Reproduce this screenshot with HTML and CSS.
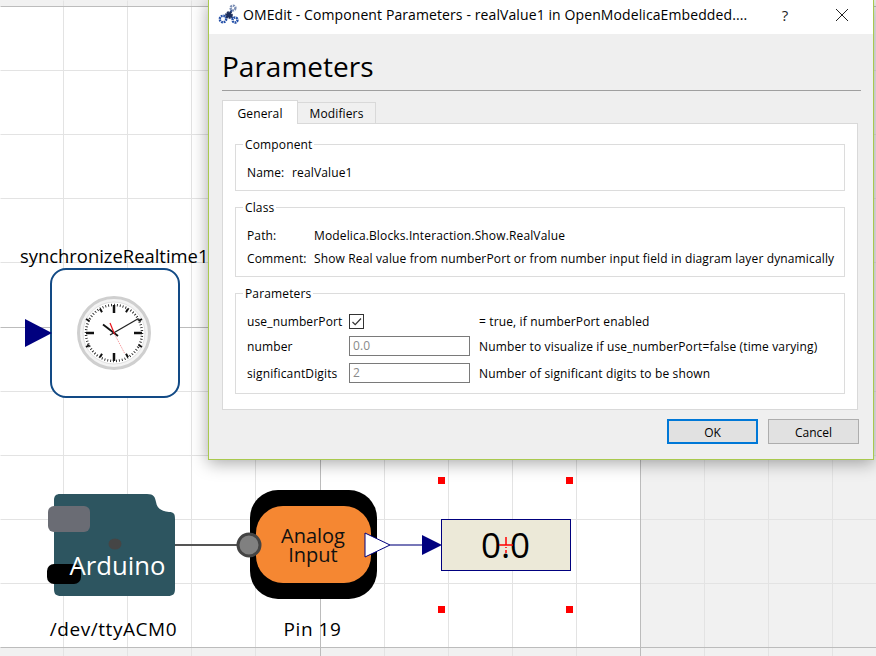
FILE: index.html
```html
<!DOCTYPE html>
<html lang="en">
<head>
<meta charset="utf-8">
<title>OMEdit - Component Parameters</title>
<link rel="stylesheet" href="styles.css">
</head>
<body>
<svg class="canvas" width="876" height="656" viewBox="0 0 876 656" xmlns="http://www.w3.org/2000/svg">
  <rect class="page" x="0" y="6" width="640" height="641"/>
  <g class="grid">
    <path d="M63 0V656M127 0V656M191 0V656M255 0V656M384 0V656M448 0V656M512 0V656M576 0V656M704 0V656M768 0V656M832 0V656"/>
    <path d="M0 70H876M0 134H876M0 198H876M0 262H876M0 391H876M0 455H876M0 519H876M0 583H876"/>
  </g>
  <g class="axis">
    <path d="M320 0V656M640 0V656M0 6H876M0 327H640M0 647H876"/>
  </g>

  <text class="label" x="20" y="263">synchronizeRealtime1</text>
  <rect class="sync" x="51" y="269" width="128" height="128" rx="15"/>
  <polygon class="navy" points="25,319 52,333 25,347"/>
  <g class="clock">
    <circle class="clock-rim" cx="114" cy="333" r="35.5"/>
    <circle class="clock-face" cx="114" cy="333" r="31"/>
    <circle class="minute-ticks" cx="114" cy="333" r="28" pathLength="60"/>
    <g class="hour-ticks">
      <path d="M114 305V313M114 353V361M86 333H94M134 333H142"/>
      <path class="thin" d="M128 308.8L126 312.3M142 319L138.5 321M142 347L138.5 345M128 357.2L126 353.7M100 357.2L102 353.7M86 347L89.5 345M86 319L89.5 321M100 308.8L102 312.3"/>
    </g>
    <path class="hand-hour" d="M103 324.5L118 336"/>
    <path class="hand-minute" d="M138.5 318.5L110 335"/>
    <path class="hand-sec" d="M110 323L114.5 334"/>
    <path class="hand-sec-thin" d="M114.5 334L125 354"/>
  </g>

  <path class="arduino" d="M60 494H147C154 494 155 497 156 502C157 509 162 511 169 512C174 512 175 514 175 519V589C175 594 173 596 168 596H61C56 596 54 594 54 589V500C54 496 56 494 60 494Z"/>
  <rect class="ard-gray" x="48" y="506" width="42" height="26" rx="6"/>
  <rect class="ard-black" x="47" y="564" width="34" height="20" rx="7"/>
  <ellipse class="ard-dot" cx="115" cy="544" rx="6.5" ry="5.5"/>
  <text class="ard-text" x="117.500" y="575">Arduino</text>
  <text class="label mid" x="113.500" y="636">/dev/ttyACM0</text>
  <path class="wire" d="M175 545H240"/>

  <rect class="block" x="250" y="490" width="127" height="109" rx="28"/>
  <rect class="orange" x="256" y="506" width="115" height="77" rx="27"/>
  <circle class="port" cx="249" cy="545" r="11"/>
  <text class="block-text" x="313" y="543">Analog</text>
  <text class="block-text" x="313" y="562">Input</text>
  <polygon class="out" points="365,533 390,545 365,557"/>
  <path class="signal" d="M390 545H424"/>
  <polygon class="navy" points="422,535 442,545 422,555"/>
  <text class="label mid" x="312.500" y="636">Pin 19</text>

  <rect class="value" x="441.500" y="519.500" width="129" height="51"/>
  <text class="value-text" x="505.500" y="558">0.0</text>
  <path class="origin" d="M499 545H513"/>
  <path class="origin-v" d="M506 537V553"/>
  <rect class="handle" x="438" y="477" width="7" height="7"/>
  <rect class="handle" x="566" y="477" width="7" height="7"/>
  <rect class="handle" x="438" y="606" width="7" height="7"/>
  <rect class="handle" x="566" y="606" width="7" height="7"/>
</svg>

<section class="dialog">
  <header class="titlebar">
    <svg class="logo" width="22" height="22" viewBox="0 0 22 22" xmlns="http://www.w3.org/2000/svg">
      <path class="logo-link" d="M5 15L11 11L15 4M11 11L17 16"/>
      <circle class="logo-ring" cx="5" cy="15" r="3.200"/>
      <circle class="logo-ring dark" cx="11" cy="11" r="2.600"/>
      <circle class="logo-ring grey" cx="15" cy="4" r="2.400"/>
      <circle class="logo-ring" cx="17" cy="16" r="2.500"/>
    </svg>
    <span class="title">OMEdit - Component Parameters - realValue1 in OpenModelicaEmbedded....</span>
    <span class="help">?</span>
    <svg class="close" width="12" height="12" viewBox="0 0 12 12" xmlns="http://www.w3.org/2000/svg"><path d="M0 0L12 12M12 0L0 12"/></svg>
  </header>
  <div class="content">
    <h1 class="heading">Parameters</h1>
    <div class="tabs">
      <span class="tab active">General</span>
      <span class="tab">Modifiers</span>
    </div>
    <div class="pane">
      <fieldset class="group">
        <legend>Component</legend>
        <div class="grid-name"><span>Name:</span><span>realValue1</span></div>
      </fieldset>
      <fieldset class="group">
        <legend>Class</legend>
        <div class="grid-class">
          <span>Path:</span><span>Modelica.Blocks.Interaction.Show.RealValue</span>
          <span>Comment:</span><span>Show Real value from numberPort or from number input field in diagram layer dynamically</span>
        </div>
      </fieldset>
      <fieldset class="group">
        <legend>Parameters</legend>
        <div class="grid-params">
          <span>use_numberPort</span>
          <span class="check"><svg width="13" height="13" viewBox="0 0 13 13" xmlns="http://www.w3.org/2000/svg"><path d="M2.500 7L5.200 9.700L11 3.500"/></svg></span>
          <span>= true, if numberPort enabled</span>
          <span>number</span>
          <span class="field">0.0</span>
          <span>Number to visualize if use_numberPort=false (time varying)</span>
          <span>significantDigits</span>
          <span class="field">2</span>
          <span>Number of significant digits to be shown</span>
        </div>
      </fieldset>
    </div>
    <div class="actions">
      <button class="btn default" type="button">OK</button>
      <button class="btn" type="button">Cancel</button>
    </div>
  </div>
</section>
</body>
</html>
```
FILE: styles.css
```css
html, body { margin: 0; padding: 0; width: 876px; height: 656px; overflow: hidden; }
body { background: #f1f1f1; font-family: "Open Sans", "Noto Sans", sans-serif; font-size: 12px; color: #000; position: relative; }

.canvas { display: block; }
.page { fill: #fff; }
.grid path { fill: none; stroke: #e3e3e3; stroke-width: 1; transform: translate(.5px, .5px); }
.axis path { fill: none; stroke: #bcbcbc; stroke-width: 1; transform: translate(.5px, .5px); }

.label { font-family: "Open Sans", sans-serif; font-size: 18.400px; fill: #000; }
.mid { text-anchor: middle; font-size: 19px; letter-spacing: .55px; }
.sync { fill: #fff; stroke: #124a85; stroke-width: 2; }
.navy { fill: #00007f; }
.clock-rim { fill: #f4f4f4; stroke: #cfcfcf; stroke-width: 3; }
.clock-face { fill: #fff; stroke: #e2e2e2; stroke-width: 1; }
.minute-ticks { fill: none; stroke: #222; stroke-width: 2.500; stroke-dasharray: .3 .7; }
.hour-ticks path { fill: none; stroke: #111; stroke-width: 2.500; }
.hour-ticks .thin { stroke-width: 2; }
.hand-hour { stroke: #111; stroke-width: 1.800; fill: none; }
.hand-minute { stroke: #222; stroke-width: 1.300; fill: none; }
.hand-sec { stroke: #e8141c; stroke-width: 1.200; fill: none; }
.hand-sec-thin { stroke: #ee5a5f; stroke-width: .6; stroke-dasharray: 1.500 1; fill: none; }

.arduino { fill: #2d5560; }
.ard-gray { fill: #6a6c74; }
.ard-black { fill: #000; }
.ard-dot { fill: #454545; }
.ard-text { font-family: "Open Sans", sans-serif; font-size: 25.700px; fill: #fff; text-anchor: middle; }
.wire { stroke: #555; stroke-width: 2; fill: none; }
.block { fill: #000; }
.orange { fill: #f58732; }
.port { fill: #808080; stroke: #444; stroke-width: 3; }
.block-text { font-family: "Open Sans", sans-serif; font-size: 20px; fill: #111; text-anchor: middle; }
.out { fill: #fff; stroke: #00007f; stroke-width: 1; }
.signal { stroke: #4a4aa0; stroke-width: 1.500; fill: none; }
.value { fill: #ece9d8; stroke: #00007f; stroke-width: 1; }
.value-text { font-family: "Open Sans", sans-serif; font-size: 35px; fill: #000; text-anchor: middle; }
.origin { stroke: #ff0000; stroke-width: 1.500; fill: none; }
.origin-v { stroke: #ff0000; stroke-width: 1.500; fill: none; stroke-dasharray: 8 2 1 2; }
.handle { fill: #ff0000; }

.dialog { position: absolute; left: 208px; top: 0; width: 666px; height: 460px; box-sizing: border-box; background: #efefef; border: 1px solid #a9c94e; border-top: 0; box-shadow: 0 3px 16px rgba(0, 0, 0, .35); display: flex; flex-direction: column; }
.titlebar { height: 34px; flex: none; background: #fff; display: flex; align-items: center; padding: 0 0 5px 9px; box-sizing: border-box; }
.logo { flex: none; margin-right: 3px; }
.logo-link { fill: none; stroke: #2d4f95; stroke-width: 2; }
.logo-ring { fill: #fff; stroke: #2450a8; stroke-width: 2.400; stroke-dasharray: 1.800 .7; }
.logo-ring.dark { fill: #1c2d5a; stroke: #1c2d5a; }
.logo-ring.grey { stroke: #7c8fb5; }
.title { font-size: 14px; letter-spacing: .1px; white-space: nowrap; width: 506px; flex: none; color: #000; }
.help { font-size: 15px; margin-left: 30px; width: 12px; text-align: center; flex: none; color: #222; }
.close { margin-left: 45px; flex: none; }
.close path { stroke: #222; stroke-width: 1; fill: none; }

.content { flex: 1; display: flex; flex-direction: column; padding: 0 14px 0 13px; min-height: 0; letter-spacing: .14px; }
.heading { margin: 0 -2px 0 0; height: 57px; box-sizing: border-box; border-bottom: 1px solid #9f9f9f; font-size: 28px; letter-spacing: 0; font-weight: 400; line-height: 64px; }
.tabs { display: flex; align-items: flex-end; margin-top: 9px; height: 23px; }
.tab { box-sizing: border-box; height: 21px; line-height: 22px; text-align: center; width: 79px; border: 1px solid #d9d9d9; border-bottom: 0; background: #f0f0f0; margin-left: -1px; }
.tab.active { height: 24px; width: 76px; margin-left: 0; background: #fff; line-height: 25px; position: relative; z-index: 1; margin-bottom: -1px; }
.pane { box-sizing: border-box; height: 287px; margin-right: 1px; border: 1px solid #d9d9d9; background: #fff; padding: 12px 12px 0; display: flex; flex-direction: column; gap: 8px; }
.group { margin: 0; min-width: 0; border: 1px solid #dcdcdc; padding: 12px 10px 0 11px; box-sizing: border-box; }
.group:nth-child(1) { height: 55px; }
.group:nth-child(2) { height: 78px; }
.group:nth-child(3) { height: 109px; }
.group legend { padding: 0 2px; margin-left: -4px; height: 16px; line-height: 18px; }
.grid-name { display: grid; grid-template-columns: 45px 1fr; line-height: 18px; }
.grid-class { display: grid; grid-template-columns: 67px 1fr; row-gap: 5px; line-height: 18px; white-space: nowrap; }
.grid-params { display: grid; grid-template-columns: 102px 130px 1fr; grid-template-rows: 16px 20px 20px; row-gap: 7px; align-items: center; white-space: nowrap; }
.check { box-sizing: border-box; width: 15px; height: 15px; border: 1px solid #333; background: #fff; display: flex; }
.check path { fill: none; stroke: #333; stroke-width: 1.200; }
.field { box-sizing: border-box; width: 121px; height: 20px; border: 1px solid #7a7a7a; background: #fff; color: #8a8a8a; line-height: 18px; padding-left: 3px; }
.actions { display: flex; justify-content: flex-end; gap: 10px; margin-top: 9px; }
.btn { box-sizing: border-box; width: 91px; height: 25px; border: 1px solid #adadad; background: #e1e1e1; font: inherit; color: #000; padding: 2px 0 0; }
.btn.default { border: 2px solid #0078d7; }
```
